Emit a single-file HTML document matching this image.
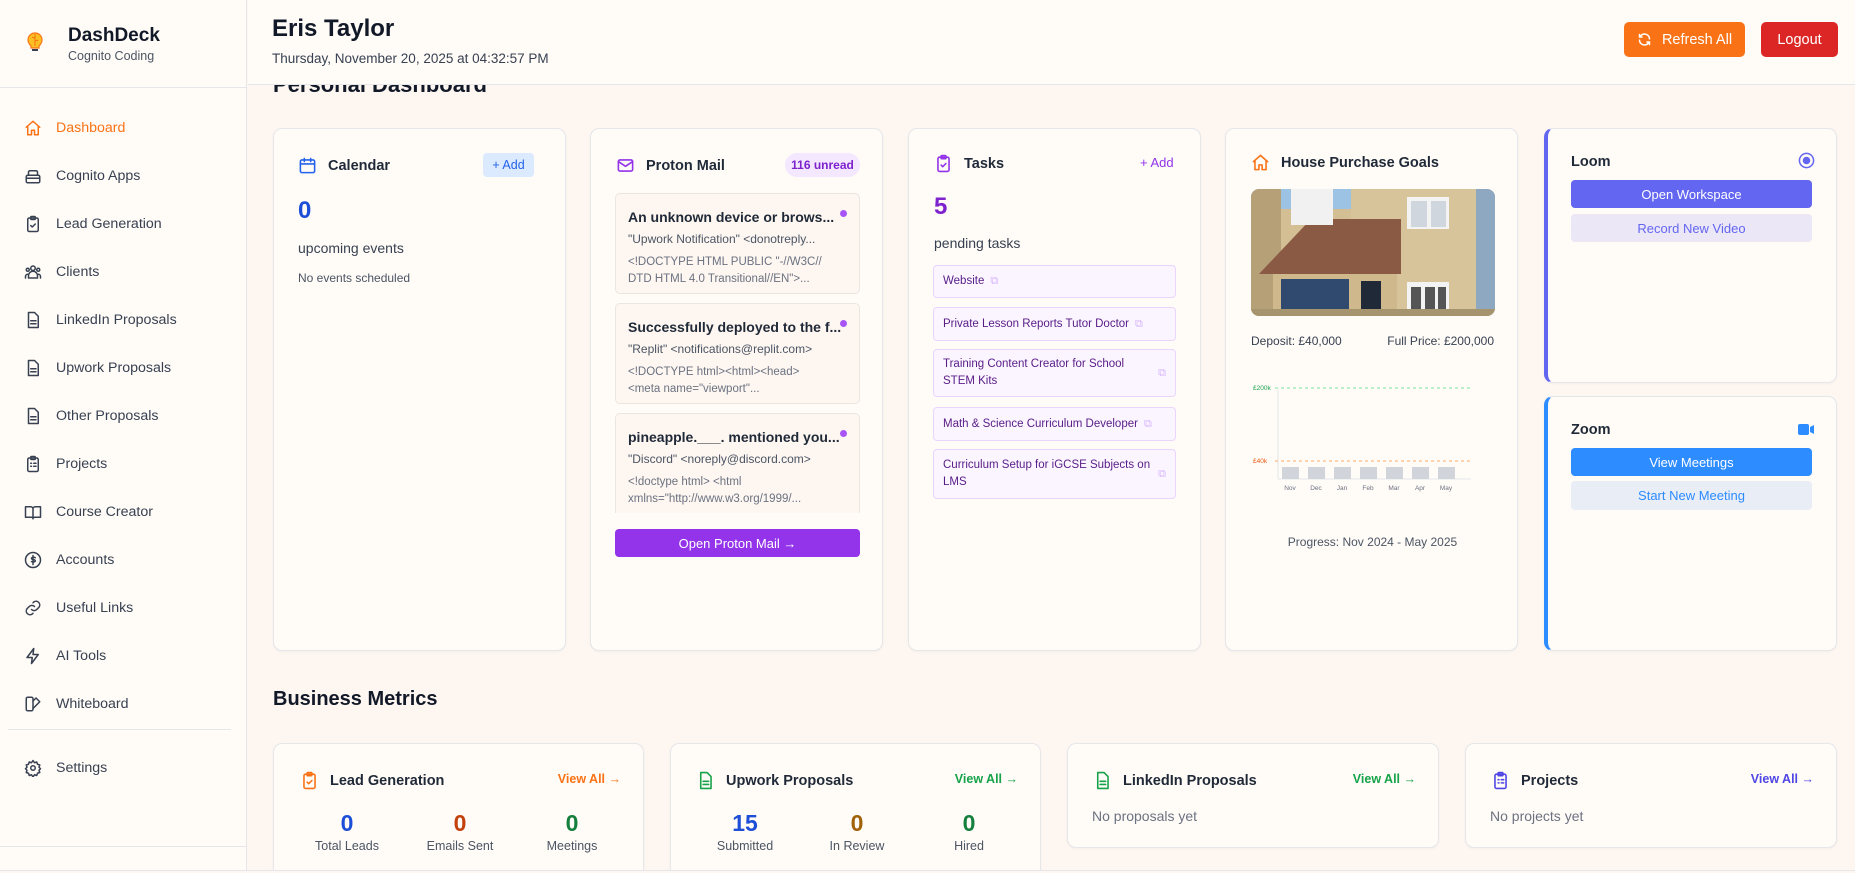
<!DOCTYPE html>
<html><head><meta charset="utf-8"><style>
*{box-sizing:border-box;margin:0;padding:0}
html,body{width:1855px;height:873px;overflow:hidden}
body{background:#fdf6f1;font-family:"Liberation Sans",sans-serif;color:#111827;position:relative}
.abs{position:absolute}
#side{left:0;top:0;width:247px;height:873px;background:#fffbf7;border-right:1px solid #e5e7eb}
.nav{position:absolute;left:24px;display:flex;align-items:center;font-size:14.2px;color:#374151}
.nav svg{width:18px;height:18px;margin-right:14px;stroke:#374151;fill:none;stroke-width:2;stroke-linecap:round;stroke-linejoin:round}
#head{left:248px;top:0;width:1607px;height:85px;background:#fffbf7;border-bottom:1px solid #e5e7eb;z-index:5}
.card{position:absolute;background:#fffbf7;border:1px solid #e5e7eb;border-radius:9px;box-shadow:0 1px 2px rgba(0,0,0,.04)}
.ttl{position:absolute;font-size:14.5px;font-weight:bold;color:#1f2937;display:flex;align-items:center}
.ttl svg{width:19px;height:19px;margin-right:11px;fill:none;stroke-width:2;stroke-linecap:round;stroke-linejoin:round}
.mail{position:absolute;left:24px;width:245px;background:#fdf6f1;border:1px solid #ece6e0;border-radius:5px;padding:15px 12px 0 12px;overflow:hidden}
.mail b{display:block;font-size:14px;color:#1f2937;margin-bottom:7px;white-space:nowrap}
.mail .f{font-size:12px;color:#4b5563;margin-bottom:8px;white-space:nowrap}
.mail .p{font-size:11.5px;color:#6b7280;line-height:17px}
.mail i{position:absolute;right:12px;top:16px;width:7px;height:7px;border-radius:50%;background:#a855f7}
.task{position:absolute;left:24px;width:243px;background:#faf5ff;border:1px solid #e9d5ff;border-radius:4px;font-size:11.5px;color:#581c87;padding:0 9px;display:flex;align-items:center;line-height:17px}
.ext{color:#d8b4fe;font-size:11px;margin-left:6px}
.btn{position:absolute;border-radius:4px;font-size:13px;display:flex;align-items:center;justify-content:center}
.mc .num{position:absolute;font-size:23px;font-weight:bold;text-align:center;width:120px}
.mc .lbl{position:absolute;font-size:12.5px;color:#4b5563;text-align:center;width:120px}
.va{position:absolute;right:22px;top:28px;font-size:12.5px;font-weight:bold}
</style></head><body>

<div id="side" class="abs">
  <svg class="abs" style="left:26px;top:31px" width="18" height="22" viewBox="0 0 18 22"><path d="M9 2C5 2 2 5 2 9c0 3 2 5 3 6v2h8v-2c1-1 3-3 3-6 0-4-3-7-7-7z" fill="#fbbf24" stroke="#f97316" stroke-width="1.2"/><path d="M9 3v12M6 6c1 1 2 1 3 0M12 9c-1 1-2 1-3 0" stroke="#f97316" fill="none"/><rect x="6" y="18" width="6" height="2" fill="#374151"/></svg>
  <div class="abs" style="left:68px;top:25px;font-size:19px;font-weight:bold;color:#111827">DashDeck</div>
  <div class="abs" style="left:68px;top:49px;font-size:12.5px;color:#4b5563">Cognito Coding</div>
  <div class="abs" style="left:0;top:87px;width:247px;border-top:1px solid #e5e7eb"></div>

  <div class="nav" style="top:119px;color:#f97316"><svg style="stroke:#f97316" viewBox="0 0 24 24"><path d="M3 11l9-8 9 8M5 9v12h5v-6h4v6h5V9"/></svg>Dashboard</div>
  <div class="nav" style="top:167px"><svg viewBox="0 0 24 24"><rect x="3" y="11" width="18" height="10" rx="2"/><path d="M6 11V7a2 2 0 012-2h8a2 2 0 012 2v4M3 15h18"/></svg>Cognito Apps</div>
  <div class="nav" style="top:215px"><svg viewBox="0 0 24 24"><rect x="5" y="4" width="14" height="18" rx="2"/><rect x="9" y="2" width="6" height="4" rx="1"/><path d="M9 14l2 2 4-4"/></svg>Lead Generation</div>
  <div class="nav" style="top:263px"><svg viewBox="0 0 24 24"><circle cx="12" cy="7" r="3"/><circle cx="5" cy="9" r="2"/><circle cx="19" cy="9" r="2"/><path d="M6 20v-3a6 6 0 0112 0v3zM2 20v-2a3 3 0 013-3M22 20v-2a3 3 0 00-3-3"/></svg>Clients</div>
  <div class="nav" style="top:311px"><svg viewBox="0 0 24 24"><path d="M6 2h8l5 5v15H6z"/><path d="M9 13h7M9 17h7"/></svg>LinkedIn Proposals</div>
  <div class="nav" style="top:359px"><svg viewBox="0 0 24 24"><path d="M6 2h8l5 5v15H6z"/><path d="M9 13h7M9 17h7"/></svg>Upwork Proposals</div>
  <div class="nav" style="top:407px"><svg viewBox="0 0 24 24"><path d="M6 2h8l5 5v15H6z"/><path d="M9 13h7M9 17h7"/></svg>Other Proposals</div>
  <div class="nav" style="top:455px"><svg viewBox="0 0 24 24"><rect x="5" y="4" width="14" height="18" rx="2"/><rect x="9" y="2" width="6" height="4" rx="1"/><path d="M9 11h1M13 11h3M9 15h1M13 15h3"/></svg>Projects</div>
  <div class="nav" style="top:503px"><svg viewBox="0 0 24 24"><path d="M2 5h7a3 3 0 013 3v13a2 2 0 00-2-2H2zM22 5h-7a3 3 0 00-3 3v13a2 2 0 012-2h8z"/></svg>Course Creator</div>
  <div class="nav" style="top:551px"><svg viewBox="0 0 24 24"><circle cx="12" cy="12" r="10"/><path d="M15 9c-1-1-5-1-5 1s5 1 5 3-4 2-5 1M12 6v12"/></svg>Accounts</div>
  <div class="nav" style="top:599px"><svg viewBox="0 0 24 24"><path d="M10 14a5 5 0 007 0l3-3a5 5 0 00-7-7l-1 1M14 10a5 5 0 00-7 0l-3 3a5 5 0 007 7l1-1"/></svg>Useful Links</div>
  <div class="nav" style="top:647px"><svg viewBox="0 0 24 24"><path d="M13 2L4 14h7l-1 8 9-12h-7z"/></svg>AI Tools</div>
  <div class="nav" style="top:695px"><svg viewBox="0 0 24 24"><rect x="3" y="3" width="9" height="18" rx="2"/><path d="M12 8l4-4 5 5-9 9"/></svg>Whiteboard</div>
  <div class="abs" style="left:8px;top:729px;width:223px;border-top:1px solid #e5e7eb"></div>
  <div class="nav" style="top:759px"><svg viewBox="0 0 24 24"><circle cx="12" cy="12" r="3"/><path d="M12 2l2 3 3-1 1 3 3 1-1 3 2 2-2 2 1 3-3 1-1 3-3-1-2 3-2-3-3 1-1-3-3-1 1-3-2-2 2-2-1-3 3-1 1-3 3 1z"/></svg>Settings</div>
  <div class="abs" style="left:0;top:846px;width:247px;border-top:1px solid #e5e7eb"></div>
</div>

<div class="abs" style="left:273px;top:72px;font-size:22px;font-weight:bold;z-index:1">Personal Dashboard</div>

<div id="head" class="abs">
  <div class="abs" style="left:24px;top:15px;font-size:24px;font-weight:bold;color:#111827">Eris Taylor</div>
  <div class="abs" style="left:24px;top:51px;font-size:13.5px;color:#374151">Thursday, November 20, 2025 at 04:32:57 PM</div>
  <div class="btn" style="left:1376px;top:22px;width:121px;height:35px;background:#f97316;color:#fff;font-size:14.5px;border-radius:5px"><svg width="15" height="15" viewBox="0 0 24 24" fill="none" stroke="#fff" stroke-width="2.4" stroke-linecap="round" style="margin-right:10px"><path d="M20 11a8 8 0 00-14-5L4 8M4 4v4h4M4 13a8 8 0 0014 5l2-2M20 20v-4h-4"/></svg>Refresh All</div>
  <div class="btn" style="left:1513px;top:22px;width:77px;height:35px;background:#dc2626;color:#fff;font-size:14.5px;border-radius:5px">Logout</div>
</div>

<!-- Calendar -->
<div class="card" style="left:273px;top:128px;width:293px;height:523px">
  <div class="ttl" style="left:24px;top:27px"><svg style="stroke:#2563eb" viewBox="0 0 24 24"><rect x="3" y="5" width="18" height="16" rx="2"/><path d="M3 10h18M8 3v4M16 3v4"/></svg>Calendar</div>
  <div class="btn" style="left:209px;top:24px;width:51px;height:24px;background:#dbeafe;color:#2563eb;font-size:12.5px">+ Add</div>
  <div class="abs" style="left:24px;top:68px;font-size:24px;font-weight:bold;color:#1d4ed8">0</div>
  <div class="abs" style="left:24px;top:111px;font-size:14px;color:#374151">upcoming events</div>
  <div class="abs" style="left:24px;top:142px;font-size:12px;color:#4b5563">No events scheduled</div>
</div>

<!-- Proton -->
<div class="card" style="left:590px;top:128px;width:293px;height:523px">
  <div class="ttl" style="left:25px;top:27px"><svg style="stroke:#9333ea" viewBox="0 0 24 24"><rect x="3" y="5" width="18" height="14" rx="2"/><path d="M3 7l9 6 9-6"/></svg>Proton Mail</div>
  <div class="btn" style="left:194px;top:24px;width:75px;height:24px;background:#f3e8ff;color:#7e22ce;font-size:12px;border-radius:12px;font-weight:bold">116 unread</div>
  <div class="mail" style="top:64px;height:101px"><i></i><b>An unknown device or brows...</b><div class="f">"Upwork Notification" &lt;donotreply...</div><div class="p">&lt;!DOCTYPE HTML PUBLIC "-//W3C//<br>DTD HTML 4.0 Transitional//EN"&gt;...</div></div>
  <div class="mail" style="top:174px;height:101px"><i></i><b>Successfully deployed to the f...</b><div class="f">"Replit" &lt;notifications@replit.com&gt;</div><div class="p">&lt;!DOCTYPE html&gt;&lt;html&gt;&lt;head&gt;<br>&lt;meta name="viewport"...</div></div>
  <div class="mail" style="top:284px;height:100px;border-bottom:none;border-radius:5px 5px 0 0"><i></i><b>pineapple.___. mentioned you...</b><div class="f">"Discord" &lt;noreply@discord.com&gt;</div><div class="p">&lt;!doctype html&gt; &lt;html<br>xmlns="http://www.w3.org/1999/...</div></div>
  <div class="btn" style="left:24px;top:400px;width:245px;height:28px;background:#9333ea;color:#fff;font-size:13px">Open Proton Mail →</div>
</div>

<!-- Tasks -->
<div class="card" style="left:908px;top:128px;width:293px;height:523px">
  <div class="ttl" style="left:25px;top:25px"><svg style="stroke:#9333ea" viewBox="0 0 24 24"><rect x="5" y="4" width="14" height="18" rx="2"/><rect x="9" y="2" width="6" height="4" rx="1"/><path d="M9 14l2 2 4-4"/></svg>Tasks</div>
  <div class="abs" style="left:231px;top:26px;font-size:13px;color:#9333ea">+ Add</div>
  <div class="abs" style="left:25px;top:64px;font-size:24px;font-weight:bold;color:#7e22ce">5</div>
  <div class="abs" style="left:25px;top:106px;font-size:14px;color:#374151">pending tasks</div>
  <div class="task" style="top:136px;height:33px">Website<span class="ext">⧉</span></div>
  <div class="task" style="top:178px;height:34px">Private Lesson Reports Tutor Doctor<span class="ext">⧉</span></div>
  <div class="task" style="top:220px;height:48px;justify-content:space-between"><span>Training Content Creator for School<br>STEM Kits</span><span class="ext">⧉</span></div>
  <div class="task" style="top:278px;height:34px">Math &amp; Science Curriculum Developer<span class="ext">⧉</span></div>
  <div class="task" style="top:320px;height:50px;justify-content:space-between"><span style="white-space:nowrap">Curriculum Setup for iGCSE Subjects on<br>LMS</span><span class="ext">⧉</span></div>
</div>

<!-- House -->
<div class="card" style="left:1225px;top:128px;width:293px;height:523px">
  <div class="ttl" style="left:25px;top:24px"><svg style="stroke:#f97316" viewBox="0 0 24 24"><path d="M3 11l9-8 9 8M5 9v12h5v-6h4v6h5V9"/></svg>House Purchase Goals</div>
  <svg class="abs" style="left:25px;top:60px;border-radius:8px" width="244" height="127" viewBox="0 0 244 127">
    <rect width="244" height="127" fill="#d4bf94"/>
    <rect x="0" y="0" width="244" height="20" fill="#9cc3e4"/>
    <rect x="0" y="0" width="30" height="127" fill="#b5a078"/>
    <rect x="100" y="0" width="130" height="127" fill="#d8c49a"/>
    <rect x="225" y="0" width="19" height="127" fill="#8fa8c2"/>
    <polygon points="8,85 60,30 150,30 150,85" fill="#8a5a44"/>
    <rect x="40" y="0" width="42" height="36" fill="#f1f1f1"/>
    <rect x="156" y="8" width="42" height="32" fill="#f3f3f3"/><rect x="160" y="12" width="16" height="26" fill="#cfd6dd"/><rect x="180" y="12" width="15" height="26" fill="#cfd6dd"/>
    <rect x="22" y="85" width="124" height="42" fill="#cfb88c"/>
    <rect x="30" y="90" width="68" height="37" fill="#2f4a6e"/>
    <rect x="110" y="92" width="20" height="35" fill="#1f2937"/>
    <rect x="156" y="93" width="42" height="30" fill="#f3f3f3"/><rect x="160" y="98" width="10" height="22" fill="#555"/><rect x="174" y="98" width="10" height="22" fill="#555"/><rect x="187" y="98" width="8" height="22" fill="#555"/>
    <rect x="0" y="120" width="244" height="7" fill="#a6946e"/>
  </svg>
  <div class="abs" style="left:25px;top:205px;font-size:12px;color:#374151">Deposit: £40,000</div>
  <div class="abs" style="right:23px;top:205px;font-size:12px;color:#374151">Full Price: £200,000</div>
  <svg class="abs" style="left:25px;top:250px" width="244" height="120" viewBox="0 0 244 120">
    <text x="2" y="11" font-size="6.5" fill="#16a34a" font-family="Liberation Sans">£200k</text>
    <line x1="24" y1="9" x2="220" y2="9" stroke="#4ade80" stroke-dasharray="3,3" stroke-width="0.8"/>
    <line x1="27" y1="9" x2="27" y2="100" stroke="#e5e7eb"/>
    <line x1="27" y1="100" x2="220" y2="100" stroke="#e5e7eb"/>
    <text x="2" y="84" font-size="6.5" fill="#ea580c" font-family="Liberation Sans">£40k</text>
    <line x1="24" y1="82" x2="220" y2="82" stroke="#fb923c" stroke-dasharray="3,3" stroke-width="0.8"/>
    <g fill="#d1d5db"><rect x="31" y="88" width="17" height="12"/><rect x="57" y="88" width="17" height="12"/><rect x="83" y="88" width="17" height="12"/><rect x="109" y="88" width="17" height="12"/><rect x="135" y="88" width="17" height="12"/><rect x="161" y="88" width="17" height="12"/><rect x="187" y="88" width="17" height="12"/></g>
    <g font-size="6.5" fill="#6b7280" font-family="Liberation Sans" text-anchor="middle"><text x="39" y="111">Nov</text><text x="65" y="111">Dec</text><text x="91" y="111">Jan</text><text x="117" y="111">Feb</text><text x="143" y="111">Mar</text><text x="169" y="111">Apr</text><text x="195" y="111">May</text></g>
  </svg>
  <div class="abs" style="left:0;width:293px;text-align:center;top:406px;font-size:12px;color:#4b5563">Progress: Nov 2024 - May 2025</div>
</div>

<!-- Loom -->
<div class="card" style="left:1544px;top:128px;width:293px;height:255px;border-left:4px solid #6366f1">
  <div class="abs" style="left:23px;top:25px;font-size:14.5px;font-weight:bold;color:#1f2937">Loom</div>
  <svg class="abs" style="left:250px;top:23px" width="17" height="17" viewBox="0 0 18 18"><circle cx="9" cy="9" r="7.5" fill="none" stroke="#6366f1" stroke-width="1.6"/><circle cx="9" cy="9" r="4" fill="#6366f1"/></svg>
  <div class="btn" style="left:23px;top:51px;width:241px;height:28px;background:#6366f1;color:#fff">Open Workspace</div>
  <div class="btn" style="left:23px;top:85px;width:241px;height:28px;background:#ebe7f6;color:#6366f1">Record New Video</div>
</div>

<!-- Zoom -->
<div class="card" style="left:1544px;top:396px;width:293px;height:255px;border-left:4px solid #2d8cff">
  <div class="abs" style="left:23px;top:25px;font-size:14.5px;font-weight:bold;color:#1f2937">Zoom</div>
  <svg class="abs" style="left:250px;top:27px" width="16" height="11" viewBox="0 0 16 11"><rect x="0" y="0" width="11" height="11" rx="2" fill="#2d8cff"/><path d="M12 3l4-2v9l-4-2z" fill="#2d8cff"/></svg>
  <div class="btn" style="left:23px;top:51px;width:241px;height:28px;background:#2d8cff;color:#fff">View Meetings</div>
  <div class="btn" style="left:23px;top:84px;width:241px;height:29px;background:#e8edf6;color:#2d8cff">Start New Meeting</div>
</div>

<div class="abs" style="left:273px;top:688px;font-size:20px;font-weight:bold;color:#111827">Business Metrics</div>

<div class="card mc" style="left:273px;top:743px;width:371px;height:140px;border-radius:9px 9px 0 0">
  <div class="ttl" style="left:26px;top:27px"><svg style="stroke:#f97316" viewBox="0 0 24 24"><rect x="5" y="4" width="14" height="18" rx="2"/><rect x="9" y="2" width="6" height="4" rx="1"/><path d="M9 14l2 2 4-4"/></svg>Lead Generation</div>
  <div class="va" style="color:#f97316">View All →</div>
  <div class="num" style="left:13px;top:66px;color:#1d4ed8">0</div><div class="lbl" style="left:13px;top:95px">Total Leads</div>
  <div class="num" style="left:126px;top:66px;color:#c2410c">0</div><div class="lbl" style="left:126px;top:95px">Emails Sent</div>
  <div class="num" style="left:238px;top:66px;color:#15803d">0</div><div class="lbl" style="left:238px;top:95px">Meetings</div>
</div>
<div class="card mc" style="left:670px;top:743px;width:371px;height:140px;border-radius:9px 9px 0 0">
  <div class="ttl" style="left:25px;top:27px"><svg style="stroke:#16a34a" viewBox="0 0 24 24"><path d="M6 2h8l5 5v15H6z"/><path d="M9 13h7M9 17h7"/></svg>Upwork Proposals</div>
  <div class="va" style="color:#16a34a">View All →</div>
  <div class="num" style="left:14px;top:66px;color:#1d4ed8">15</div><div class="lbl" style="left:14px;top:95px">Submitted</div>
  <div class="num" style="left:126px;top:66px;color:#a16207">0</div><div class="lbl" style="left:126px;top:95px">In Review</div>
  <div class="num" style="left:238px;top:66px;color:#15803d">0</div><div class="lbl" style="left:238px;top:95px">Hired</div>
</div>
<div class="card mc" style="left:1067px;top:743px;width:372px;height:105px">
  <div class="ttl" style="left:25px;top:27px"><svg style="stroke:#16a34a" viewBox="0 0 24 24"><path d="M6 2h8l5 5v15H6z"/><path d="M9 13h7M9 17h7"/></svg>LinkedIn Proposals</div>
  <div class="va" style="color:#16a34a">View All →</div>
  <div class="abs" style="left:24px;top:64px;font-size:14px;color:#6b7280">No proposals yet</div>
</div>
<div class="card mc" style="left:1465px;top:743px;width:372px;height:105px">
  <div class="ttl" style="left:25px;top:27px"><svg style="stroke:#4f46e5" viewBox="0 0 24 24"><rect x="5" y="4" width="14" height="18" rx="2"/><rect x="9" y="2" width="6" height="4" rx="1"/><path d="M9 11h1M13 11h3M9 15h1M13 15h3"/></svg>Projects</div>
  <div class="va" style="color:#4f46e5">View All →</div>
  <div class="abs" style="left:24px;top:64px;font-size:14px;color:#6b7280">No projects yet</div>
</div>
<div class="abs" style="left:0;top:870px;width:1855px;height:40px;background:#fdf6f1;border-top:1px solid #e5e7eb;z-index:6"></div>
</body></html>
